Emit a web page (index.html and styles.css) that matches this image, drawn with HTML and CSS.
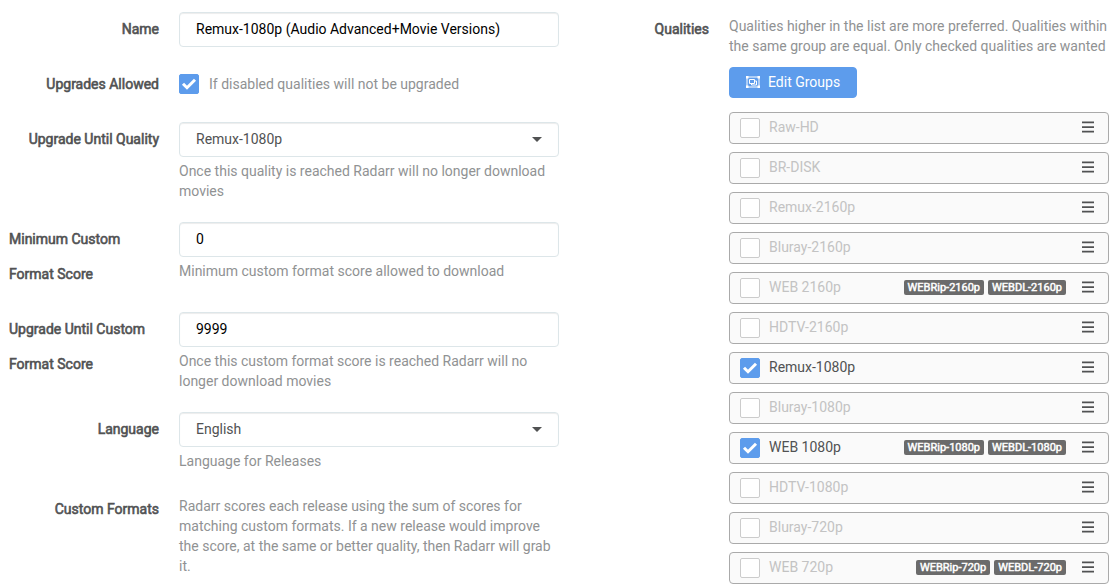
FILE: index.html
```
<!DOCTYPE html>
<html lang="en">
<head>
<meta charset="utf-8">
<title>Edit Quality Profile</title>
<link rel="stylesheet" href="styles.css">
</head>
<body>
<main class="profile">
  <form class="settings">
    <div class="group"><div class="label">Name</div><div class="control"><div class="input">Remux-1080p (Audio Advanced+Movie Versions)</div></div></div>
    <div class="group"><div class="label">Upgrades Allowed</div><div class="control check-row"><span class="check checked"><svg viewBox="0 0 18 18"><path d="M3 8.700 7 12.700 15 4.700"/></svg></span><span class="check-help">If disabled qualities will not be upgraded</span></div></div>
    <div class="group"><div class="label">Upgrade Until Quality</div><div class="control"><div class="input select">Remux-1080p<i class="caret"></i></div><p class="help">Once this quality is reached Radarr will no longer download movies</p></div></div>
    <div class="group"><div class="label wrapped">Minimum Custom Format Score</div><div class="control"><div class="input">0</div><p class="help">Minimum custom format score allowed to download</p></div></div>
    <div class="group"><div class="label wrapped">Upgrade Until Custom Format Score</div><div class="control"><div class="input">9999</div><p class="help">Once this custom format score is reached Radarr will no longer download movies</p></div></div>
    <div class="group"><div class="label">Language</div><div class="control"><div class="input select">English<i class="caret"></i></div><p class="help">Language for Releases</p></div></div>
    <div class="group"><div class="label">Custom Formats</div><div class="control"><p class="help formats">Radarr scores each release using the sum of scores for matching custom formats. If a new release would improve the score, at the same or better quality, then Radarr will grab it.</p></div></div>
  </form>
  <section class="qualities">
    <div class="label">Qualities</div>
    <div class="quality-body">
      <p class="intro">Qualities higher in the list are more preferred. Qualities within<br>the same group are equal. Only checked qualities are wanted</p>
      <button class="edit" type="button"><svg class="group-icon" viewBox="0 0 14 12"><path d="M1 1h12v10H1zM3.500 3.500h5v4h-5zM8.500 5h2v4h-5V7.500"/><path class="nodes" d="M0 0h2.500v2.500H0zM11.500 0H14v2.500h-2.500zM0 9.500h2.500V12H0zM11.500 9.500H14V12h-2.500z"/></svg><span class="edit-text">Edit Groups</span></button>
      <div class="list" id="list"></div>
    </div>
  </section>
</main>
<script src="script.js"></script>
</body>
</html>
```
FILE: styles.css
```
* { box-sizing: border-box; }
body { margin: 0; height: 588px; overflow: hidden; background: #fff; color: #515253; font: 14px/20px Roboto, "Open Sans", sans-serif; }
p { margin: 0; }
.profile { display: flex; padding: 12px 0 0 9px; }
.settings { width: 550px; flex: none; }
.group { display: flex; margin-bottom: 20px; }
.label { width: 150px; flex: none; line-height: 35px; font-weight: 400; -webkit-text-stroke: 0.6px #515253; text-align: right; }
.wrapped { text-align: left; }
.control { width: 380px; margin-left: 20px; color: #909293; }
.input { height: 35px; padding: 0 16px; border: 1px solid #dde6e9; border-radius: 4px; color: #000; line-height: 33px; box-shadow: inset 0 1px 1px rgba(0,0,0,.075); }
.select { display: flex; align-items: center; justify-content: space-between; color: #515253; }
.caret { border: 5px solid transparent; border-top-color: #515253; border-bottom: 0; }
.help { padding-top: 4px; padding-bottom: 1px; }
.formats { width: 376px; padding-top: 4px; }
.check-row { display: flex; align-items: center; height: 35px; gap: 10px; }
.check-row .check { margin-top: -1px; }
.check-help { padding-bottom: 2px; }
.check { width: 20px; height: 20px; flex: none; border: 1px solid #ccc; border-radius: 2px; background: #fff; }
.check.checked { border-color: #5d9cec; background: #5d9cec; }
.check svg { display: block; width: 18px; height: 18px; fill: none; stroke: #fff; stroke-width: 3; }
.qualities { display: flex; }
.quality-body { width: 380px; margin-left: 20px; color: #909293; }
.intro { padding: 4px 0 1px; white-space: nowrap; }
.edit { display: flex; align-items: center; gap: 8px; width: 128px; height: 31px; margin: 10px 0 14px; padding: 0 16px; border: 1px solid #5d9cec; border-radius: 4px; background: #5d9cec; color: #fff; font: inherit; white-space: nowrap; }
.edit-text { padding-bottom: 1px; }
.group-icon { width: 14px; height: 12px; flex: none; margin-bottom: 1px; fill: none; stroke: #fff; stroke-width: 1; }
.nodes { fill: #fff; stroke: none; }
.list { display: grid; gap: 8px; }
.item { display: flex; align-items: center; height: 32px; padding: 0 14px 0 10px; border: 1px solid #aaa; border-radius: 4px; background: #fafafa; color: #c3c3c3; }
.item.on { color: #515253; }
.item .name { flex: 1; margin-left: 9px; padding-bottom: 2px; }
.tags { display: flex; gap: 4px; margin: 0 16px 1px 0; }
.tag { height: 15px; padding: 0 4px; border-radius: 2px; background: #6b6b6b; color: #fff; font: 400 11px/15px Roboto, sans-serif; -webkit-text-stroke: 0.45px #fff; }
.grip { width: 12px; height: 12px; margin-bottom: 2px; fill: #515253; }
```
FILE: script.js
```
const qualities = [['Raw-HD'], ['BR-DISK'], ['Remux-2160p'], ['Bluray-2160p'], ['WEB 2160p', '2160p'], ['HDTV-2160p'], ['Remux-1080p'], ['Bluray-1080p'], ['WEB 1080p', '1080p'], ['HDTV-1080p'], ['Bluray-720p'], ['WEB 720p', '720p']];
const enabled = ['Remux-1080p', 'WEB 1080p'];
document.getElementById('list').innerHTML = qualities.map(([name, size]) => {
  const on = enabled.includes(name);
  const tags = size ? `<span class="tags"><span class="tag">WEBRip-${size}</span><span class="tag">WEBDL-${size}</span></span>` : '';
  return `<div class="item${on ? ' on' : ''}"><span class="check${on ? ' checked' : ''}">${on ? '<svg viewBox="0 0 18 18"><path d="M3 8.700 7 12.700 15 4.700"/></svg>' : ''}</span><span class="name">${name}</span>${tags}<svg class="grip" viewBox="0 0 12 12"><path d="M0 .6h12v1.700H0zM0 5.200h12v1.700H0zM0 9.700h12v1.700H0z"/></svg></div>`;
}).join('');
```
